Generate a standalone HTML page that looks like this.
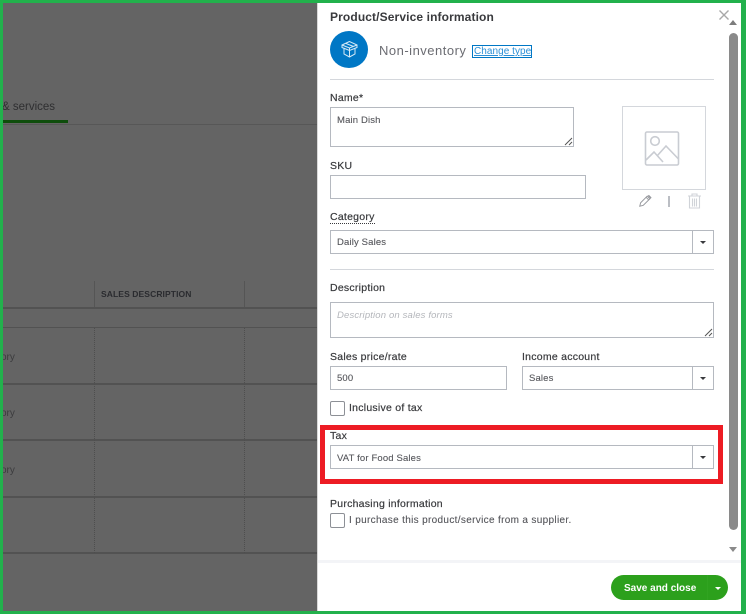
<!DOCTYPE html>
<html><head><meta charset="utf-8">
<style>
html,body{margin:0;padding:0}
body{width:746px;height:614px;overflow:hidden;position:relative;background:#fff;font-family:"Liberation Sans",sans-serif}
.a{position:absolute;box-sizing:border-box}
.t{position:absolute;white-space:nowrap;line-height:14px}
.l{font-size:10.5px;color:#393a3d;letter-spacing:.25px;-webkit-text-stroke:.2px #393a3d}
.v{font-size:9.5px;color:#54555a;letter-spacing:.15px;-webkit-text-stroke:.1px #54555a}
.b{position:absolute;box-sizing:border-box;border:1px solid #b5b9c0;background:#fff}
.hr{position:absolute;left:330px;width:384px;height:1px;background:#d4d7dc}
.dv{position:absolute;top:0;bottom:0;width:1px;background:#b5b9c0}
.c{position:absolute;width:0;height:0;border-left:3.5px solid transparent;border-right:3.5px solid transparent;border-top:3.5px solid #393a3d}
.g{position:absolute;left:3px;width:314px;background:#525252}
.d{position:absolute;top:328px;height:225px;width:0;border-left:1px dotted #4e4e4e}
.o{position:absolute;left:1px;width:20px;overflow:hidden;font-size:10px;color:#3c3c3e;line-height:12px}
</style></head><body>
<div class="a" style="left:0;top:0;width:318px;height:614px;background:#646464"></div>
<div class="t" style="left:2px;top:100px;width:60px;overflow:hidden;font-size:11.5px;color:#2f2f31">&amp; services</div>
<div class="a" style="left:3px;top:120px;width:65px;height:3px;background:#0e4d0b"></div>
<div class="g" style="top:124px;height:1px;background:#575757"></div>
<div class="a" style="left:94px;top:281px;width:1px;height:27px;background:#555"></div>
<div class="a" style="left:244px;top:281px;width:1px;height:27px;background:#555"></div>
<div class="t" style="left:101px;top:287px;font-size:8.5px;font-weight:bold;color:#2a2b2f;letter-spacing:.1px">SALES DESCRIPTION</div>
<div class="g" style="top:307px;height:2px"></div>
<div class="g" style="top:327px;height:1px"></div>
<div class="g" style="top:383px;height:2px"></div>
<div class="g" style="top:439px;height:2px"></div>
<div class="g" style="top:496px;height:2px"></div>
<div class="g" style="top:552px;height:2px"></div>
<div class="d" style="left:94px"></div><div class="d" style="left:244px"></div>
<div class="o" style="top:352px">ory</div>
<div class="o" style="top:408px">ory</div>
<div class="o" style="top:465px">ory</div>

<div class="a" style="left:317px;top:0;width:1px;height:614px;background:#d9d9d9"></div>

<div class="t" style="left:330px;top:10px;font-size:12px;font-weight:bold;color:#393a3d;letter-spacing:.12px">Product/Service information</div>
<div class="a" style="left:330px;top:31px;width:38px;height:37px;border-radius:50%;background:#0077c5"></div>
<svg class="a" style="left:340px;top:40px" width="19" height="19" viewBox="0 0 19 19" fill="none" stroke="#d5e9f6" stroke-width="1"><path d="M9.5 1.500 2 5v2.500l7.500 3 7.500-3V5zM2 5l7.500 3L17 5M4 8.500V14l5.500 3 5.500-3V8.500M9.500 8v9M6 3.500l7.500 3"/></svg>
<div class="t" style="left:379px;top:44px;font-size:13px;color:#6b6c72;letter-spacing:.5px">Non-inventory</div>
<div class="a" style="left:472px;top:45px;width:60px;height:13px;border:1px solid #0077c5"></div>
<div class="t" style="left:474px;top:45px;font-size:10px;color:#2b8fd6;line-height:13px;letter-spacing:.05px;text-decoration:underline">Change type</div>
<div class="hr" style="top:79px"></div>

<div class="t l" style="left:330px;top:91px">Name*</div>
<div class="b" style="left:330px;top:107px;width:244px;height:40px"></div>
<div class="t v" style="left:337px;top:114px">Main Dish</div>
<svg class="a" style="left:564px;top:137px" width="9" height="9" stroke="#555" stroke-width="1"><path d="M1 8 8 1M5 8 8 5"/></svg>
<div class="t l" style="left:330px;top:159px">SKU</div>
<div class="b" style="left:330px;top:175px;width:256px;height:24px"></div>

<div class="a" style="left:622px;top:106px;width:84px;height:84px;border:1px solid #d4d7dc"></div>
<svg class="a" style="left:644px;top:130px" width="37" height="37" viewBox="0 0 37 37" fill="none" stroke="#c9ccd2" stroke-width="1.600"><rect x="1.500" y="2" width="33" height="33" rx="1.500"/><circle cx="11" cy="11" r="4.300"/><path d="M2 30l8-8 9 10M13 26l9-10 12.500 13"/></svg>
<svg class="a" style="left:638px;top:194px" width="14" height="14" viewBox="0 0 16 16" fill="none" stroke="#96989d" stroke-width="1.100"><path d="M2 14l1-4 7.500-7.500 3 3L6 13zM9.300 3.800l3 3"/><path d="M11 2l1.500-1 3 3-1 1.500z" fill="#96989d" stroke="none"/></svg>
<div class="a" style="left:668px;top:196px;width:2px;height:11px;background:#bbbec4"></div>
<svg class="a" style="left:687px;top:193px" width="15" height="16" viewBox="0 0 15 16" fill="none" stroke="#d0d3d8" stroke-width="1.100"><path d="M1 3h13M5 3V1h5v2M2.500 3v12h10V3M5.500 5.500v8M7.500 5.500v8M9.500 5.500v8"/></svg>

<div class="t l" style="left:330px;top:211px;border-bottom:1px dotted #393a3d;line-height:12px">Category</div>
<div class="b" style="left:330px;top:230px;width:384px;height:24px"><div class="dv" style="left:361px"></div><div class="c" style="left:369px;top:10px"></div></div>
<div class="t v" style="left:337px;top:236px">Daily Sales</div>
<div class="hr" style="top:269px"></div>

<div class="t l" style="left:330px;top:281px">Description</div>
<div class="b" style="left:330px;top:302px;width:384px;height:36px"></div>
<div class="t v" style="left:337px;top:309px;font-style:italic;color:#b4b6bb;-webkit-text-stroke:0">Description on sales forms</div>
<svg class="a" style="left:704px;top:328px" width="9" height="9" stroke="#555" stroke-width="1"><path d="M1 8 8 1M5 8 8 5"/></svg>

<div class="t l" style="left:330px;top:350px">Sales price/rate</div>
<div class="t l" style="left:522px;top:350px">Income account</div>
<div class="b" style="left:330px;top:366px;width:177px;height:24px"></div>
<div class="t v" style="left:337px;top:372px">500</div>
<div class="b" style="left:522px;top:366px;width:192px;height:24px"><div class="dv" style="left:169px"></div><div class="c" style="left:177px;top:10px"></div></div>
<div class="t v" style="left:529px;top:372px">Sales</div>

<div class="a" style="left:330px;top:401px;width:15px;height:15px;border:1px solid #8d9096;border-radius:2px"></div>
<div class="t l" style="left:349px;top:401px">Inclusive of tax</div>

<div class="hr" style="top:483px"></div>
<div class="a" style="left:320px;top:425px;width:403px;height:59px;border:5px solid #ed1c24"></div>
<div class="t l" style="left:330px;top:429px">Tax</div>
<div class="b" style="left:330px;top:445px;width:384px;height:24px"><div class="dv" style="left:361px"></div><div class="c" style="left:369px;top:10px"></div></div>
<div class="t v" style="left:337px;top:452px">VAT for Food Sales</div>

<div class="t l" style="left:330px;top:497px">Purchasing information</div>
<div class="a" style="left:330px;top:513px;width:15px;height:15px;border:1px solid #8d9096;border-radius:2px"></div>
<div class="t l" style="left:349px;top:514px;color:#54555a;font-size:10px;letter-spacing:.33px;-webkit-text-stroke:.1px #54555a">I purchase this product/service from a supplier.</div>

<div class="a" style="left:318px;top:560px;width:423px;height:3px;background:#f3f4f7"></div>
<div class="a" style="left:611px;top:575px;width:117px;height:25px;border-radius:13px;background:#2ca01c"></div>
<div class="a" style="left:707px;top:575px;width:1px;height:25px;background:#31a421"></div>
<div class="t" style="left:624px;top:583px;font-size:10px;font-weight:bold;color:#fff;line-height:12px">Save and close</div>
<div class="c" style="left:715px;top:587px;border-top-color:#fff"></div>

<svg class="a" style="left:718px;top:9px" width="12" height="12" stroke="#a8a8a8" stroke-width="1.400"><path d="M1.500 1.500l9 9M10.500 1.500l-9 9"/></svg>
<div class="a" style="left:729px;top:20px;width:0;height:0;border-left:4.500px solid transparent;border-right:4.500px solid transparent;border-bottom:5px solid #7d7d7d"></div>
<div class="a" style="left:729px;top:33px;width:9px;height:497px;border-radius:5px;background:#8a8a8a"></div>
<div class="a" style="left:729px;top:547px;width:0;height:0;border-left:4.500px solid transparent;border-right:4.500px solid transparent;border-top:5px solid #8a8a8a"></div>

<div class="a" style="left:0;top:0;width:746px;height:3px;background:#22b14c"></div>
<div class="a" style="left:0;top:611px;width:746px;height:3px;background:#22b14c"></div>
<div class="a" style="left:0;top:0;width:3px;height:614px;background:#22b14c"></div>
<div class="a" style="left:741px;top:0;width:5px;height:614px;background:#22b14c"></div>
</body></html>
